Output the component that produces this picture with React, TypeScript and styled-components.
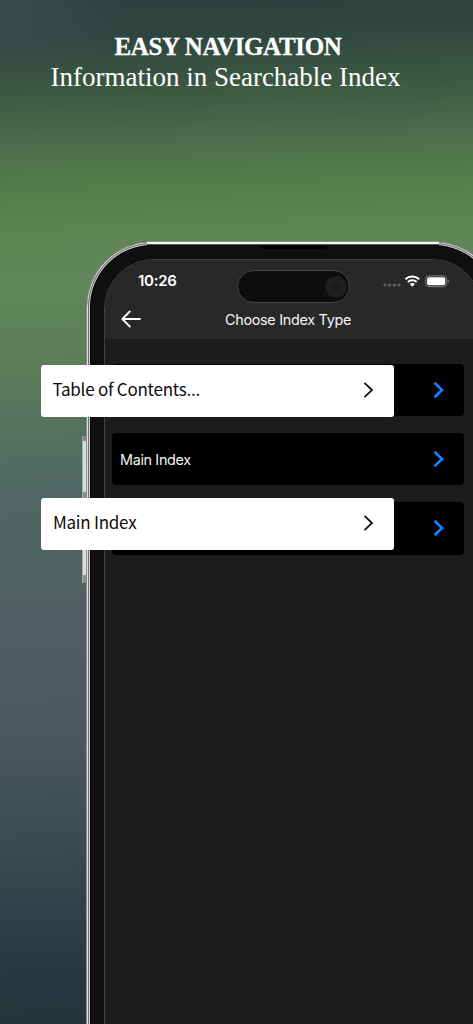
import React from 'react';
import styled, { createGlobalStyle } from 'styled-components';

const GlobalStyle = createGlobalStyle`
  *, *::before, *::after { box-sizing: border-box; }
  body { margin: 0; }
  h1, p { margin: 0; font-weight: 400; }
`;

const Poster = styled.main`
  position: relative;
  width: 473px;
  height: 1024px;
  overflow: hidden;
  display: flex;
  flex-direction: column;
  font-family: Inter, sans-serif;
  background:
    radial-gradient(ellipse 130px 90px at 0 0, rgba(66, 82, 86, 0.6), transparent),
    linear-gradient(
      178deg,
      #2b403c 0%,
      #2f4640 4%,
      #3c5842 9%,
      #4b6c4a 14%,
      #557b4b 18%,
      #5f8555 23%,
      #60855a 29%,
      #5c7d58 35%,
      #547060 42%,
      #4f6663 48%,
      #4f6361 55%,
      #505e64 61%,
      #4c5a60 69%,
      #42545a 75%,
      #394c51 81%,
      #2f4148 88%,
      #25383f 94%,
      #21353b 100%
    );
`;

const Headline = styled.header`
  display: flex;
  flex: none;
  flex-direction: column;
  align-items: center;
  width: 451px;
  height: 241px;
  padding-top: 31px;
  color: #fff;
  font-family: "Liberation Serif", serif;
  white-space: nowrap;
`;

const Title = styled.h1`
  padding-left: 5px;
  font-size: 25px;
  line-height: 31px;
  font-weight: 700;
  letter-spacing: -0.35px;
  -webkit-text-stroke: 0.3px #fff;
`;

const Subtitle = styled.p`
  font-size: 27px;
  line-height: 30px;
`;

const Phone = styled.div`
  position: relative;
  flex: none;
  width: 414px;
  height: 900px;
  margin-left: 86px;
  padding: 17px 17px 0;
  border-radius: 66px;
  background: #0f0f10;
  border: 1px solid #8b8b8b;
  box-shadow: inset 0 0 0 1px #dedede, inset 0 0 0 2px #6f6f6f, inset 0 0 0 3px #cfcfcf, inset 0 0 0 4px #050505;
`;

const TopShine = styled.div`
  position: absolute;
  top: -1px;
  left: 60px;
  right: 60px;
  height: 5px;
  background: linear-gradient(#8a8f88 0 1px, #f4f4f4 1px 3px, #555 3px 4px, #101010 4px);
`;

const Earpiece = styled.div`
  position: absolute;
  top: 4px;
  left: 174px;
  width: 66px;
  height: 3px;
  border-radius: 0 0 3px 3px;
  background: #000;
`;

const SideButton = styled.div<{ $top: number; $height: number }>`
  position: absolute;
  left: -5px;
  top: ${({ $top }) => $top}px;
  width: 4px;
  height: ${({ $height }) => $height}px;
  border-left: 1px solid #a9a9a9;
  background: linear-gradient(#858585 0 5px, #dcdcdc 5px calc(100% - 8px), #8c8c8c calc(100% - 8px));
`;

const Screen = styled.div`
  height: 100%;
  overflow: hidden;
  border: 1px solid #414141;
  border-radius: 50px 50px 0 0;
  background: #1c1c1e;
`;

const AppBar = styled.div`
  position: relative;
  height: 79px;
  background: #282828;
  color: #f4f4f4;
`;

const StatusRow = styled.div`
  display: flex;
  align-items: center;
  height: 41px;
  padding-left: 33px;
`;

const Clock = styled.span`
  width: 245px;
  font-size: 15px;
  line-height: 20px;
  font-weight: 600;
  letter-spacing: -0.25px;
  color: #fff;
`;

const Island = styled.div`
  position: absolute;
  top: 10px;
  left: 132px;
  display: flex;
  align-items: center;
  justify-content: flex-end;
  width: 113px;
  height: 33px;
  padding-right: 2px;
  border: 1px solid #484848;
  border-radius: 17px;
  background: #0d0d0e;
`;

const Lens = styled.div`
  width: 22px;
  height: 22px;
  border-radius: 50%;
  background: radial-gradient(circle, #1b1b1b 0 5px, #202020 6px 9px, #1c1c1d 10px);
`;

const NavRow = styled.div`
  display: flex;
  align-items: center;
  height: 36px;
  padding-left: 16px;
`;

const NavTitle = styled.span`
  margin-left: 84px;
  padding-top: 1px;
  font-size: 14.4px;
  line-height: 20px;
  letter-spacing: -0.3px;
  white-space: nowrap;
`;

const IndexList = styled.div`
  display: flex;
  flex-direction: column;
  gap: 17px;
  width: 367px;
  padding: 25px 8px 0 7px;
`;

const IndexRow = styled.div`
  display: flex;
  align-items: center;
  justify-content: space-between;
  height: 52.2px;
  padding: 0 19px 0 8px;
  border-radius: 4px;
  background: #000;
  color: #f2f2f2;
  font-size: 14.4px;
  letter-spacing: -0.35px;
`;

const Callout = styled.div<{ $top: number; $inset: number }>`
  position: absolute;
  left: 41.4px;
  top: ${({ $top }) => $top}px;
  display: flex;
  align-items: center;
  justify-content: space-between;
  width: 352.2px;
  height: 52px;
  padding: 0 19px 2px ${({ $inset }) => $inset}px;
  border-radius: 3px;
  background: #fff;
  color: #0c0c0c;
  font-family: "Noto Sans CJK SC", sans-serif;
  font-size: 17px;
  line-height: 24px;
  letter-spacing: -0.24px;
`;

const CalloutText = styled.span`
  padding-bottom: 2px;
`;

const BackArrow = () => (
  <svg width="20" height="18" viewBox="0 0 20 18" fill="none" stroke="#fff" strokeWidth="1.8" strokeLinecap="round" strokeLinejoin="round">
    <path d="M19 9H1.5M8.8 1.5 1.3 9l7.5 7.5" />
  </svg>
);

const Chevron = ({ color, weight }: { color: string; weight: number }) => (
  <svg width="13" height="18" viewBox="0 0 13 18" fill="none" stroke={color} strokeWidth={weight}>
    <path d="M2.5 1.8 10 9l-7.5 7.2" />
  </svg>
);

const StatusIcons = () => (
  <svg width="68" height="16" viewBox="0 0 68 16">
    <g fill="#646464">
      <circle cx="1.9" cy="12" r="1.6" />
      <circle cx="6.6" cy="12" r="1.6" />
      <circle cx="11.3" cy="12" r="1.6" />
      <circle cx="16" cy="12" r="1.6" />
    </g>
    <g fill="none" stroke="#fff" strokeWidth="2.1">
      <path d="M22.4 6.3a10 10 0 0 1 13.8 0" />
      <path d="M24.9 9a6.4 6.4 0 0 1 8.8 0" />
    </g>
    <path d="M26.7 11.1a3.8 3.8 0 0 1 5.2 0L29.3 13.8z" fill="#fff" />
    <rect x="42.7" y="2.9" width="21" height="10.8" rx="3.2" fill="none" stroke="#808080" />
    <rect x="44.1" y="4.3" width="18.2" height="8" rx="2" fill="#fff" />
    <path d="M64.9 6.5c1.4.5 1.4 3.1 0 3.6z" fill="#808080" />
  </svg>
);

export default function App() {
  return (
    <>
      <GlobalStyle />
      <Poster>
        <Headline>
          <Title>EASY NAVIGATION</Title>
          <Subtitle>Information in Searchable Index</Subtitle>
        </Headline>
        <Phone>
          <SideButton $top={194} $height={64} />
          <SideButton $top={276} $height={65} />
          <TopShine />
          <Earpiece />
          <Screen>
            <AppBar>
              <StatusRow>
                <Clock>10:26</Clock>
                <StatusIcons />
              </StatusRow>
              <NavRow>
                <BackArrow />
                <NavTitle>Choose Index Type</NavTitle>
              </NavRow>
              <Island>
                <Lens />
              </Island>
            </AppBar>
            <IndexList>
              {['', 'Main Index', ''].map((label, i) => (
                <IndexRow key={i}>
                  <span>{label}</span>
                  <Chevron color="#0a84ff" weight={2.6} />
                </IndexRow>
              ))}
            </IndexList>
          </Screen>
        </Phone>
        <Callout $top={365} $inset={11}>
          <CalloutText>Table of Contents...</CalloutText>
          <Chevron color="#111" weight={1.8} />
        </Callout>
        <Callout $top={498} $inset={11.5}>
          <CalloutText>Main Index</CalloutText>
          <Chevron color="#111" weight={1.8} />
        </Callout>
      </Poster>
    </>
  );
}
